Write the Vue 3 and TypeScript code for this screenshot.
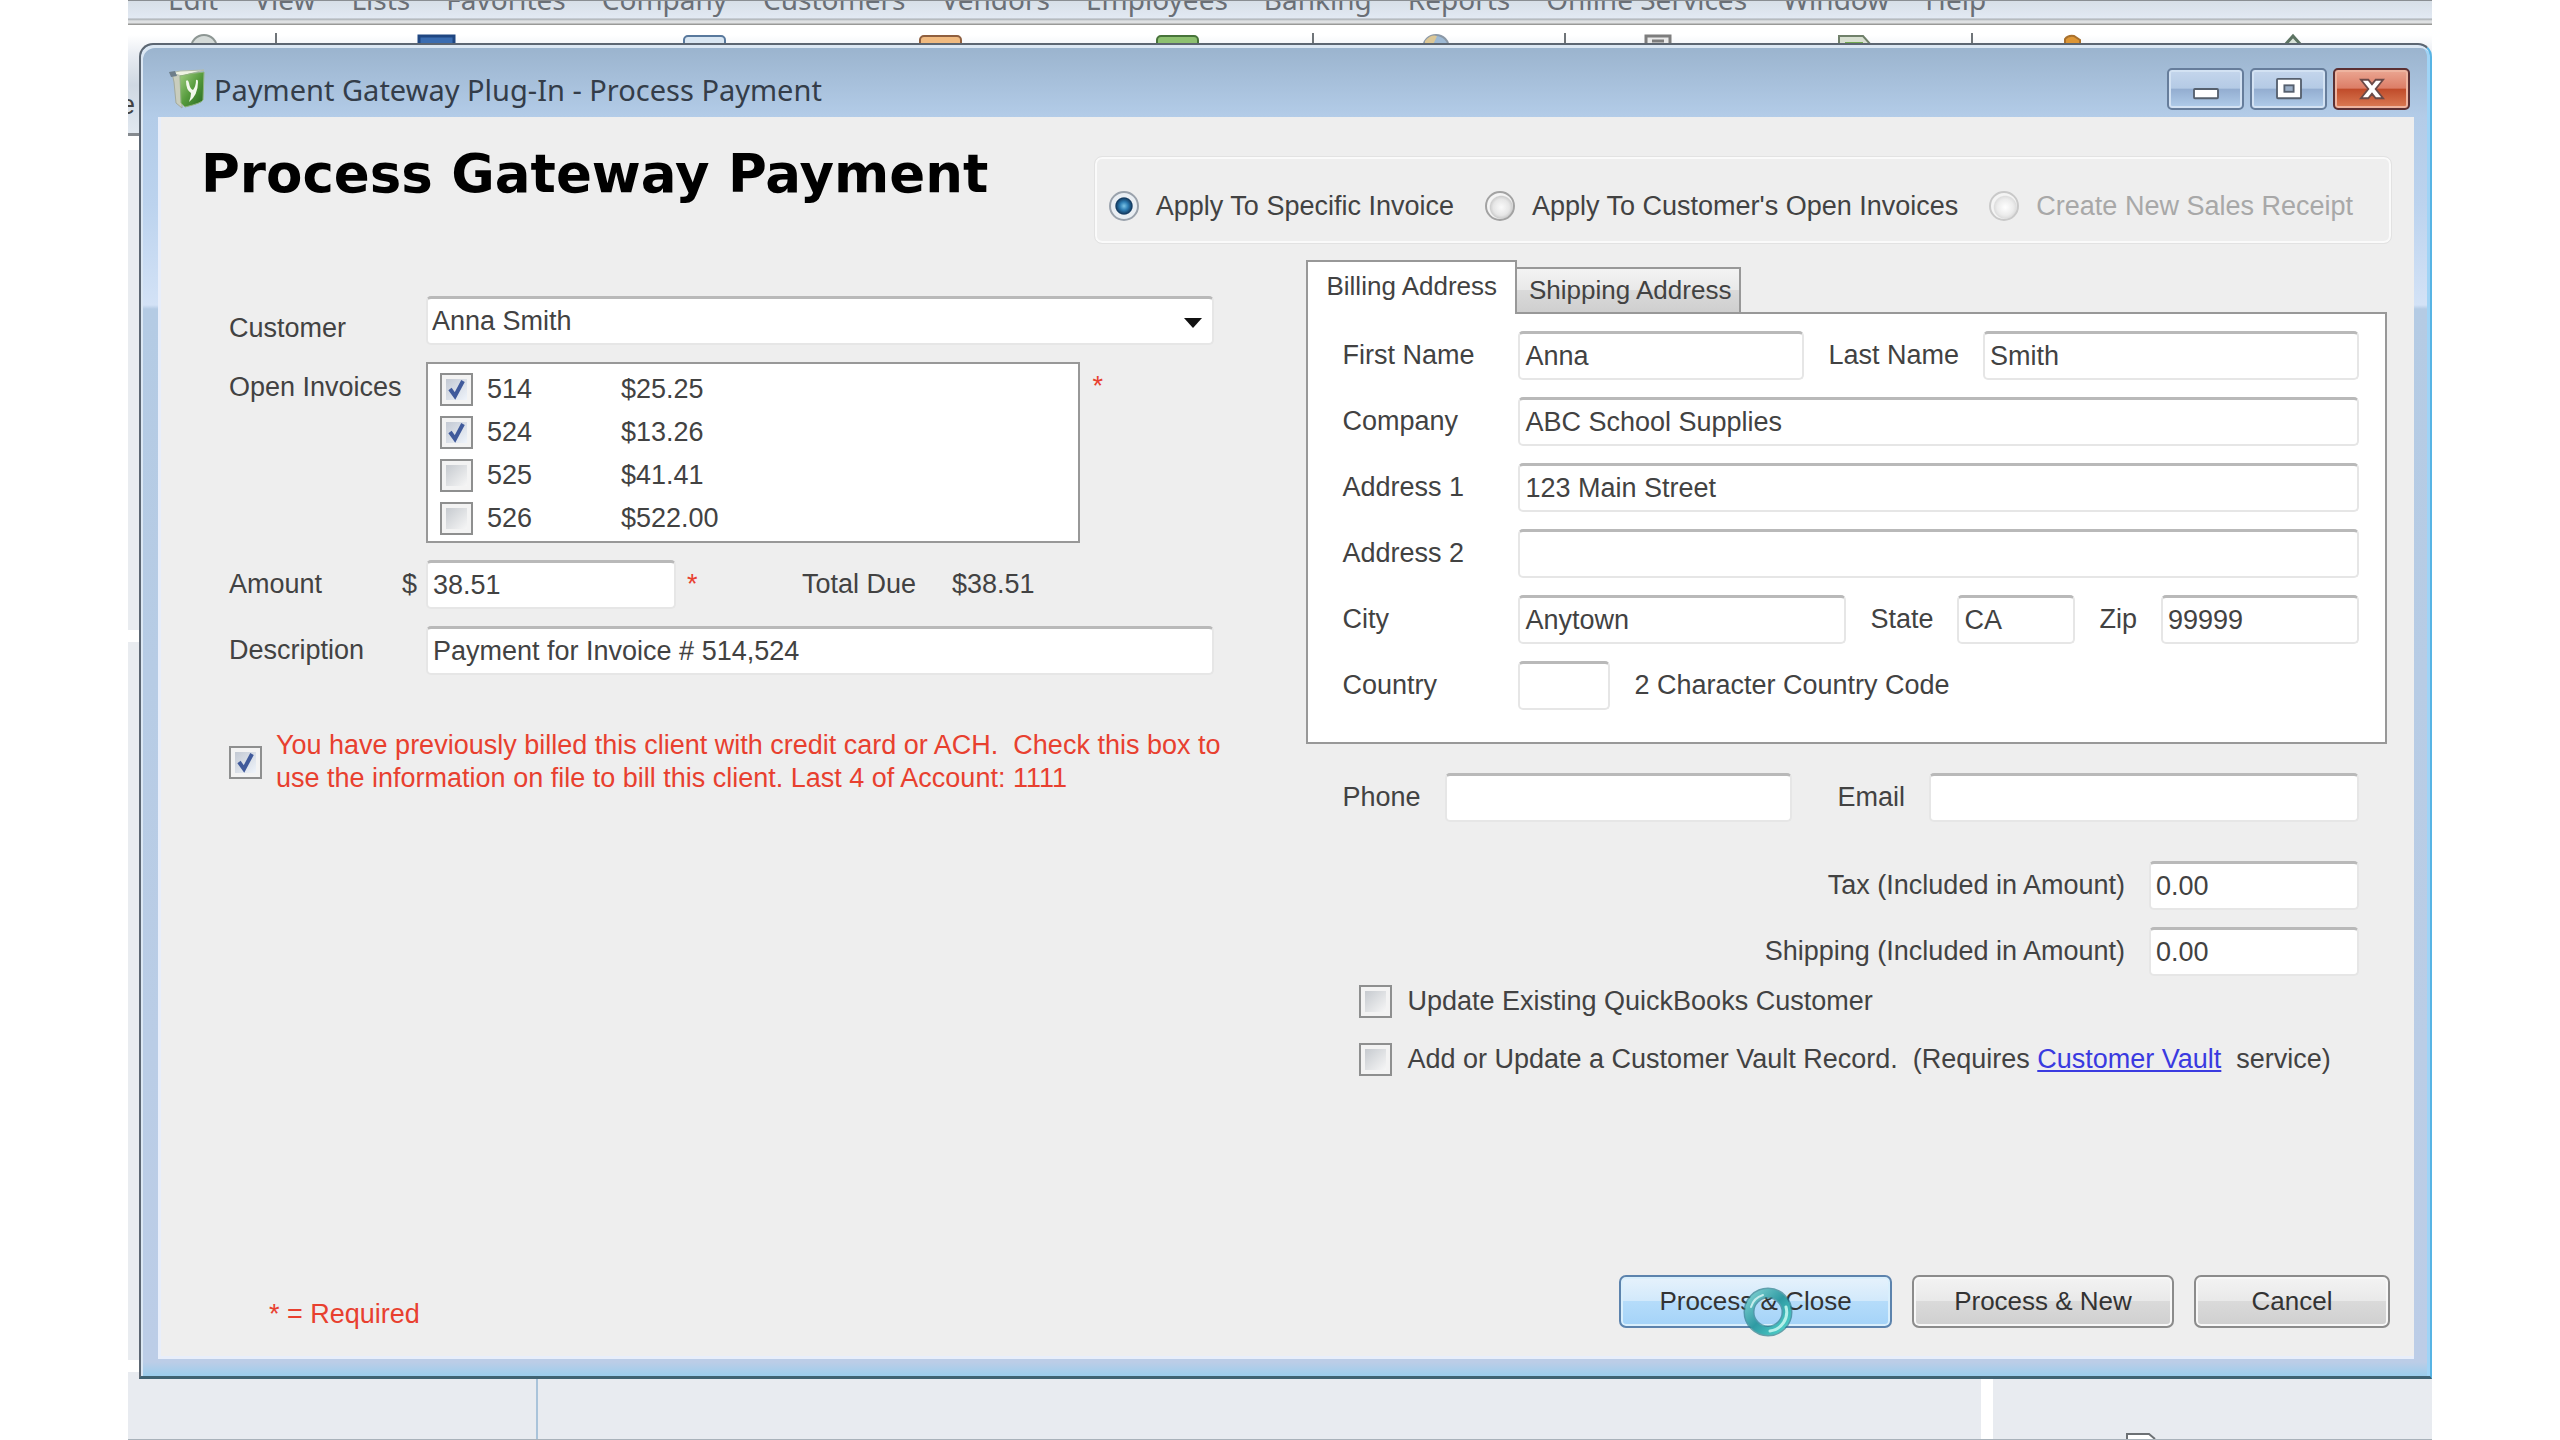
<script setup lang="ts">
import { ref } from 'vue'

interface Invoice {
  id: string
  amount: string
  selected: boolean
}

interface ApplyMode {
  value: string
  label: string
  disabled?: boolean
}

const menus: string[] = [
  'Edit', 'View', 'Lists', 'Favorites', 'Company', 'Customers', 'Vendors',
  'Employees', 'Banking', 'Reports', 'Online Services', 'Window', 'Help',
]

const modes: ApplyMode[] = [
  { value: 'specific', label: 'Apply To Specific Invoice' },
  { value: 'open', label: "Apply To Customer's Open Invoices" },
  { value: 'receipt', label: 'Create New Sales Receipt', disabled: true },
]
const mode = ref('specific')

const invoices = ref<Invoice[]>([
  { id: '514', amount: '$25.25', selected: true },
  { id: '524', amount: '$13.26', selected: true },
  { id: '525', amount: '$41.41', selected: false },
  { id: '526', amount: '$522.00', selected: false },
])

const customer = ref('Anna Smith')
const amount = ref('38.51')
const description = ref('Payment for Invoice # 514,524')
const useOnFile = ref(true)
const firstName = ref('Anna')
const lastName = ref('Smith')
const company = ref('ABC School Supplies')
const address1 = ref('123 Main Street')
const address2 = ref('')
const city = ref('Anytown')
const state = ref('CA')
const zip = ref('99999')
const country = ref('')
const phone = ref('')
const email = ref('')
const tax = ref('0.00')
const shipping = ref('0.00')
const updateCustomer = ref(false)
const updateVault = ref(false)
</script>

<template>
  <div class="stage">
    <div class="host">
      <nav class="menubar">
        <span v-for="m in menus" :key="m">{{ m }}</span>
      </nav>
      <div class="toolbar">
        <svg class="tool-icons" viewBox="0 0 2304 20" aria-hidden="true">
          <circle cx="76" cy="23" r="13" fill="#d4dad8" stroke="#8d9693" stroke-width="2" />
          <path d="M148 8v12M1185 8v12M1437 8v12M1844 8v12" stroke="#6f7478" stroke-width="2" />
          <rect x="291" y="11" width="35" height="14" fill="#3a6cb0" stroke="#1f4681" stroke-width="3" />
          <rect x="556" y="11" width="41" height="16" rx="4" fill="#d9e6f2" stroke="#58789c" stroke-width="2" />
          <rect x="792" y="11" width="41" height="16" rx="4" fill="#f0ba80" stroke="#8f5f3e" stroke-width="2" />
          <rect x="1029" y="11" width="41" height="16" rx="4" fill="#8dc070" stroke="#47733a" stroke-width="2" />
          <circle cx="1308" cy="23" r="13" fill="#9db9d4" stroke="#8b98a6" stroke-width="2" />
          <path d="M1297 16q6-7 12-5l-4 9h-8z" fill="#dcc796" />
          <path d="M1518 20v-9h24v9M1524 16h12" fill="#e9e9e9" stroke="#7d7d7d" stroke-width="3" />
          <path d="M1711 20v-9h24l8 9z" fill="#d7dfd0" stroke="#70806a" stroke-width="2" />
          <path d="M1717 20v-3h18v3z" fill="#71a950" />
          <path d="M1937 20v-6q3-4 9-3l6 4v5z" fill="#dd9636" stroke="#a8702d" stroke-width="2" />
          <path d="M2157 20l8-9 8 9" fill="#d9e3d9" stroke="#5c7362" stroke-width="3" />
        </svg>
        <span class="tool-label">e</span>
      </div>
      <div class="host-gap"></div>
      <div class="host-pane upper"></div>
      <div class="host-pane lower"></div>
      <div class="host-foot">
        <div class="foot-a"></div>
        <div class="foot-b"></div>
        <div class="foot-c">
          <svg viewBox="0 0 32 6" aria-hidden="true">
            <path d="M2 6V1h22l6 5" fill="#fff" stroke="#6c7074" stroke-width="2" />
          </svg>
        </div>
      </div>
    </div>

    <section class="dialog" role="dialog" aria-labelledby="dlg-title">
      <header class="titlebar">
        <svg class="app-icon" viewBox="0 0 38 42" aria-hidden="true">
          <defs>
            <linearGradient id="leaf" x1="0" y1="0" x2="1" y2="1">
              <stop offset="0" stop-color="#a3cf83" />
              <stop offset="0.5" stop-color="#569b3d" />
              <stop offset="1" stop-color="#25681f" />
            </linearGradient>
          </defs>
          <path d="M4 5l10 1v34l-6-5L6 14z" fill="#c9cdbd" stroke="#a3aa9c" />
          <path d="M3 5l9-2 24-1-22 6z" fill="#eef2e2" stroke="#b3bcab" />
          <path d="M12 8q12-3 24-4l-1 28q-1 3-18 7l-4-4z" fill="url(#leaf)" stroke="#8fb37c" />
          <path d="M1 4l6-1 2 5-6 1z" fill="#6d7d8a" />
          <path d="M18 13q2-2 3 2 1 6 4 7 3-4 3-10 2-1 2 2 0 13-9 20 2-5 2-9-5-3-5-12z" fill="#f3f8ec" />
        </svg>
        <span id="dlg-title" class="title-text">Payment Gateway Plug-In - Process Payment</span>
        <div class="win-buttons">
          <button type="button" class="win-btn" aria-label="Minimize">
            <svg viewBox="0 0 30 26" aria-hidden="true">
              <rect x="2" y="13" width="26" height="10" rx="1" fill="#fff" stroke="#56606e" stroke-width="2" />
            </svg>
          </button>
          <button type="button" class="win-btn" aria-label="Maximize">
            <svg viewBox="0 0 30 26" aria-hidden="true">
              <rect x="2" y="2" width="26" height="21" rx="1" fill="#fff" stroke="#56606e" stroke-width="2" />
              <rect x="10" y="9" width="10" height="7" fill="#9aaec6" stroke="#56606e" stroke-width="2" />
            </svg>
          </button>
          <button type="button" class="win-btn close" aria-label="Close">
            <svg viewBox="0 0 30 26" aria-hidden="true">
              <path d="M3 3h8l4 5 4-5h8l-8 10 8 10h-8l-4-5-4 5H3l8-10z" fill="#fff" stroke="#6b4a48" stroke-width="2" />
            </svg>
          </button>
        </div>
      </header>

      <form class="body" @submit.prevent>
        <div class="head">
          <h1>Process Gateway Payment</h1>
          <div class="modes" role="radiogroup">
            <label v-for="m in modes" :key="m.value" :class="{ disabled: m.disabled }">
              <input v-model="mode" type="radio" name="mode" :value="m.value" :disabled="m.disabled" />
              {{ m.label }}
            </label>
          </div>
        </div>

        <div class="columns">
          <div class="left">
            <div class="row low">
              <label for="customer">Customer</label>
              <div class="combo">
                <select id="customer" v-model="customer" class="field">
                  <option>Anna Smith</option>
                </select>
                <svg viewBox="0 0 18 10" aria-hidden="true"><path d="M0 0h18l-9 10z" fill="#111" /></svg>
              </div>
            </div>
            <div class="row top">
              <span class="caption">Open Invoices</span>
              <div class="list-wrap">
                <ul class="invoices">
                  <li v-for="inv in invoices" :key="inv.id">
                    <label>
                      <input v-model="inv.selected" type="checkbox" />
                      <span class="inv-id">{{ inv.id }}</span>
                      <span>{{ inv.amount }}</span>
                    </label>
                  </li>
                </ul>
                <span class="star">*</span>
              </div>
            </div>
            <div class="row">
              <label for="amount" class="money">Amount <span>$</span></label>
              <div class="amount-line">
                <input id="amount" v-model="amount" class="field" type="text" />
                <span class="star">*</span>
                <span class="due">Total Due</span>
                <output>$38.51</output>
              </div>
            </div>
            <div class="row">
              <label for="description">Description</label>
              <input id="description" v-model="description" class="field" type="text" />
            </div>
            <label class="on-file">
              <input v-model="useOnFile" type="checkbox" />
              <span>You have previously billed this client with credit card or ACH.&nbsp; Check this box to<br />use the information on file to bill this client. Last 4 of Account: 1111</span>
            </label>
          </div>

          <div class="right">
            <div class="tabs" role="tablist">
              <button type="button" role="tab" aria-selected="true" class="tab active">Billing Address</button>
              <button type="button" role="tab" aria-selected="false" class="tab">Shipping Address</button>
            </div>
            <div class="panel" role="tabpanel">
              <div class="prow">
                <label for="first">First Name</label>
                <div class="split">
                  <input id="first" v-model="firstName" class="field first" type="text" />
                  <label for="last">Last Name</label>
                  <input id="last" v-model="lastName" class="field grow" type="text" />
                </div>
              </div>
              <div class="prow">
                <label for="company">Company</label>
                <input id="company" v-model="company" class="field" type="text" />
              </div>
              <div class="prow">
                <label for="addr1">Address 1</label>
                <input id="addr1" v-model="address1" class="field" type="text" />
              </div>
              <div class="prow">
                <label for="addr2">Address 2</label>
                <input id="addr2" v-model="address2" class="field" type="text" />
              </div>
              <div class="prow">
                <label for="city">City</label>
                <div class="split">
                  <input id="city" v-model="city" class="field grow" type="text" />
                  <label for="state">State</label>
                  <input id="state" v-model="state" class="field state" type="text" />
                  <label for="zip">Zip</label>
                  <input id="zip" v-model="zip" class="field zip" type="text" />
                </div>
              </div>
              <div class="prow">
                <label for="country">Country</label>
                <div class="split">
                  <input id="country" v-model="country" class="field country" type="text" />
                  <span>2 Character Country Code</span>
                </div>
              </div>
            </div>
            <div class="contact">
              <label for="phone">Phone</label>
              <input id="phone" v-model="phone" class="field phone" type="text" />
              <label for="email" class="email-label">Email</label>
              <input id="email" v-model="email" class="field grow" type="text" />
            </div>
            <div class="extras">
              <div class="extra">
                <label for="tax">Tax (Included in Amount)</label>
                <input id="tax" v-model="tax" class="field" type="text" />
              </div>
              <div class="extra">
                <label for="ship">Shipping (Included in Amount)</label>
                <input id="ship" v-model="shipping" class="field" type="text" />
              </div>
            </div>
            <div class="options">
              <div class="option">
                <input id="upd" v-model="updateCustomer" type="checkbox" />
                <label for="upd">Update Existing QuickBooks Customer</label>
              </div>
              <div class="option">
                <input id="vault" v-model="updateVault" type="checkbox" />
                <label for="vault">Add or Update a Customer Vault Record.&nbsp; (Requires <a href="#">Customer Vault</a>&nbsp; service)</label>
              </div>
            </div>
          </div>
        </div>

        <footer class="foot">
          <span class="required">* = Required</span>
          <div class="actions">
            <button type="submit" class="btn primary">
              Process &amp; Close
              <svg class="busy" viewBox="0 0 50 50" aria-hidden="true">
                <defs>
                  <linearGradient id="ring" x1="0" y1="0" x2="1" y2="1">
                    <stop offset="0" stop-color="#7ccfd0" />
                    <stop offset="0.5" stop-color="#2f9aa3" />
                    <stop offset="1" stop-color="#4fd3cb" />
                  </linearGradient>
                </defs>
                <circle cx="25" cy="25" r="19" fill="none" stroke="#2b7f8c" stroke-opacity="0.7" stroke-width="11" />
                <circle cx="25" cy="25" r="19" fill="none" stroke="url(#ring)" stroke-width="8" />
                <path d="M43 20a19 19 0 0 1-16 24" fill="none" stroke="#b5f0ea" stroke-width="3" stroke-linecap="round" />
                <path d="M8 20a18 18 0 0 1 12-12" fill="none" stroke="#c5ecec" stroke-width="2" stroke-linecap="round" />
              </svg>
            </button>
            <button type="button" class="btn new">Process &amp; New</button>
            <button type="button" class="btn cancel">Cancel</button>
          </div>
        </footer>
      </form>
    </section>
  </div>
</template>

<style>
body {
  margin: 0;
  background: #fff;
}
</style>

<style scoped>
* {
  box-sizing: border-box;
}

.stage {
  position: relative;
  margin: 0 5%;
  min-height: 100vh;
  overflow: hidden;
  display: flex;
  font-family: 'Liberation Sans', Arial, sans-serif;
  font-size: 27px;
  line-height: 33px;
  color: #424242;
}

/* Application window behind the dialog */
.host {
  flex: 1;
  min-width: 0;
  display: flex;
  flex-direction: column;
  background: #fff;
}

.menubar {
  display: flex;
  align-items: flex-end;
  gap: 36px;
  height: 25px;
  padding: 0 0 9px 40px;
  overflow: hidden;
  white-space: nowrap;
  font-family: 'Noto Sans', sans-serif;
  font-size: 28px;
  color: #6a6f76;
  background: linear-gradient(#d7dfe7, #e2e9f3 17px, #a9aeb3 18px, #dfe1e3 20px, #dfe1e3 22px, #9a9a98 23px);
  border-top: 1px solid #8a8e92;
}

.toolbar {
  height: 111px;
  background: linear-gradient(#fff 10px, #e8ecf2 30px, #cfd8e2 60px, #e1e8f0);
  border-bottom: 3px solid #858a8f;
}

.tool-icons {
  display: block;
  width: 100%;
}

.tool-label {
  display: block;
  margin-top: 44px;
  margin-left: -8px;
}

.host-gap {
  height: 14px;
}

.host-pane {
  background: #e9ecf0;
}

.host-pane.upper {
  height: 480px;
}

.host-pane.lower {
  flex: 1;
  margin: 12px 0;
}

.host-foot {
  display: grid;
  grid-template-columns: 410fr 1443fr 451fr;
  height: 68px;
  border-bottom: 1px solid #a9b2ba;
}

.host-foot > div {
  background: #e8ebf0;
}

.host-foot .foot-a {
  border-right: 2px solid #a9c3da;
}

.host-foot .foot-c {
  border-left: 12px solid #fff;
  display: flex;
  align-items: flex-end;
  padding-left: 132px;
}

.foot-c svg {
  width: 32px;
  height: 6px;
}

/* Dialog window */
.dialog {
  position: absolute;
  inset: 43px 0 61px 11px;
  display: flex;
  flex-direction: column;
  padding: 0 16px 17px 17px;
  border: 2px solid #5c6672;
  border-right: 2px solid #58b4e4;
  border-bottom: 3px solid #3f6272;
  border-radius: 14px 14px 0 0;
  background: linear-gradient(#9ab3cd, #b3cce8 72px, #bcd3ee 160px, #d3e2f6 260px, #b4cbe4 264px, #bacde6 1000px, #bccde7 calc(100% - 14px), #9bcdec);
  box-shadow: inset 2px 3px 0 #dbe7f3, inset -3px 0 0 #a0d4f6;
}

.titlebar {
  display: flex;
  align-items: center;
  height: 72px;
  padding: 16px 4px 0 10px;
  gap: 8px;
}

.app-icon {
  width: 38px;
  height: 42px;
}

.title-text {
  flex: 1;
  font-family: 'Noto Sans', sans-serif;
  font-size: 29px;
  color: #343d49;
}

.win-buttons {
  display: flex;
  gap: 6px;
}

.win-btn {
  width: 77px;
  height: 42px;
  padding: 0;
  display: flex;
  align-items: center;
  justify-content: center;
  border: 2px solid #667d9b;
  border-radius: 5px;
  background: linear-gradient(#c5d6ec, #b4cae5 48%, #93add0 50%, #b1cdea);
  box-shadow: inset 0 0 0 2px #d3e2f3;
}

.win-btn svg {
  width: 28px;
  height: 24px;
}

.win-btn.close {
  border-color: #5b3033;
  background: linear-gradient(#eba793, #dc7d66 48%, #c04b2a 50%, #db7c55);
  box-shadow: inset 0 0 0 2px #eeb4a0;
}

.body {
  flex: 1;
  display: flex;
  flex-direction: column;
  background: #eee;
  box-shadow: inset 3px -3px 0 #e8eefa;
}

.head {
  display: flex;
  justify-content: space-between;
  align-items: flex-start;
  padding: 40px 23px 0 43px;
}

h1 {
  margin: 0;
  font-family: 'DejaVu Sans', Verdana, sans-serif;
  font-size: 53px;
  line-height: 34px;
  font-weight: 700;
  color: #000;
  white-space: nowrap;
}

.modes {
  display: flex;
  gap: 31px;
  align-items: center;
  height: 86px;
  padding: 12px 36px 0 12px;
  border: 2px solid #fafafa;
  border-radius: 7px;
  outline: 1px solid #e2e2e2;
  white-space: nowrap;
}

.modes label {
  display: flex;
  align-items: center;
  gap: 17px;
}

.modes .disabled {
  color: #a8a8a8;
}

input[type='radio'] {
  appearance: none;
  width: 30px;
  height: 30px;
  margin: 0;
  border: 2px solid #a2a2a2;
  border-radius: 50%;
  background: radial-gradient(circle at 55% 55%, #fafafa, #e6e6e6 40%, #cfcfcf 54%, #f4f4f4 60%);
}

input[type='radio']:checked {
  border-color: #9aa2ac;
  background: radial-gradient(circle at 50% 50%, #7cc4e6 0, #2f7fb5 22%, #12395f 44%, #e9eef3 50%);
}

input[type='radio']:disabled {
  border-color: #c9c9c9;
  background: radial-gradient(circle at 55% 55%, #fff, #ececec 40%, #dedede 54%, #f4f4f4 60%);
}

input[type='checkbox'] {
  appearance: none;
  flex: none;
  width: 33px;
  height: 33px;
  margin: 0;
  border: 2px solid #8e8f8f;
  background: linear-gradient(135deg, #c6cacf, #f6f6f6) center / 21px 21px no-repeat #f3f3f3;
}

input[type='checkbox']:checked {
  background:
    url("data:image/svg+xml,%3Csvg xmlns='http://www.w3.org/2000/svg' viewBox='0 0 29 29'%3E%3Cpath d='M8 14l5 7L21 6' fill='none' stroke='%23405a9b' stroke-width='4'/%3E%3C/svg%3E") center / 29px 29px no-repeat,
    linear-gradient(135deg, #c3c9d3, #eff4fb) center / 21px 21px no-repeat #f3f3f3;
}

.field {
  appearance: none;
  width: 100%;
  min-width: 0;
  height: 49px;
  margin: 0;
  padding: 0 5px;
  border: 2px solid #e6e6e6;
  border-top: 3px solid #b9b9b9;
  border-radius: 5px;
  background: #fff;
  font: inherit;
  color: #424242;
}

.columns {
  display: grid;
  grid-template-columns: minmax(0, 985fr) minmax(0, 1080fr);
  gap: 92px;
  padding: 17px 27px 0 71px;
}

.left {
  display: flex;
  flex-direction: column;
  gap: 17px;
  padding-top: 36px;
}

.row {
  display: grid;
  grid-template-columns: 197px minmax(0, 1fr);
  align-items: center;
}

.row.low {
  align-items: end;
}

.row.top {
  align-items: start;
}

.caption {
  padding-top: 9px;
}

.combo {
  position: relative;
}

.combo select {
  display: block;
  padding-left: 4px;
}

.combo svg {
  position: absolute;
  right: 12px;
  top: 22px;
  width: 18px;
  height: 10px;
}

.list-wrap,
.amount-line {
  display: flex;
}

.list-wrap {
  gap: 12px;
}

.star {
  color: #e8402f;
  line-height: 49px;
}

.invoices {
  width: 83%;
  height: 181px;
  margin: 0;
  padding: 4px 12px;
  border: 2px solid #989898;
  background: #fff;
  list-style: none;
}

.invoices label {
  display: flex;
  align-items: center;
  height: 43px;
}

.inv-id {
  width: 134px;
  margin-left: 14px;
}

.money {
  display: flex;
  justify-content: space-between;
  padding-right: 9px;
}

.amount-line {
  align-items: center;
}

.amount-line .field {
  width: 250px;
}

.amount-line .star {
  width: 126px;
  padding-left: 11px;
}

.due {
  width: 150px;
}

.on-file {
  display: flex;
  align-items: center;
  gap: 14px;
  margin-top: 37px;
  color: #e8402f;
  white-space: nowrap;
}

/* Address tabs */
.tabs {
  display: flex;
  align-items: flex-end;
  height: 52px;
}

.tab {
  position: relative;
  height: 47px;
  margin: 0 0 -2px -2px;
  padding: 0 8px 0 12px;
  border: 2px solid #989898;
  background: linear-gradient(#f3f3f3, #e9e9e9 48%, #dadada 50%, #cfcfcf);
  font: inherit;
  font-size: 26px;
  color: #424242;
}

.tab.active {
  height: 54px;
  margin-left: 0;
  padding: 0 18px 4px;
  border-bottom: 0;
  background: #fff;
}

.panel {
  display: flex;
  flex-direction: column;
  gap: 17px;
  padding: 17px 26px 32px 34px;
  border: 2px solid #989898;
  background: #fff;
}

.prow {
  display: grid;
  grid-template-columns: 176px minmax(0, 1fr);
  align-items: center;
}

.split {
  display: flex;
  align-items: center;
  gap: 24px;
  white-space: nowrap;
}

.grow {
  flex: 1;
}

.first {
  width: 286px;
}

.state {
  width: 118px;
}

.zip {
  width: 198px;
}

.country {
  width: 92px;
}

.contact {
  display: flex;
  align-items: center;
  gap: 24px;
  padding: 29px 28px 0 36px;
}

.phone {
  width: 347px;
}

.email-label {
  margin-left: 22px;
}

.extras {
  display: flex;
  flex-direction: column;
  gap: 17px;
  padding: 39px 28px 0 0;
}

.extra {
  display: flex;
  justify-content: flex-end;
  align-items: center;
  gap: 24px;
}

.extra .field {
  width: 210px;
}

.options {
  display: flex;
  flex-direction: column;
  gap: 25px;
  padding: 9px 0 0 53px;
}

.option {
  display: flex;
  align-items: center;
  gap: 15px;
  white-space: nowrap;
}

a {
  color: #3a3ae0;
}

.foot {
  display: flex;
  justify-content: space-between;
  align-items: center;
  margin-top: auto;
  padding: 0 24px 28px 111px;
}

.required {
  padding-top: 26px;
  color: #e8402f;
}

.actions {
  display: flex;
  gap: 20px;
}

.btn {
  height: 53px;
  padding: 0;
  border: 2px solid #8b8b8b;
  border-radius: 7px;
  background: linear-gradient(#f3f3f3, #e9e9e9 48%, #dadada 50%, #cfcfcf);
  box-shadow: inset 0 0 0 2px #f7f7f7;
  font: inherit;
  font-size: 26px;
  color: #333;
}

.btn.primary {
  position: relative;
  width: 273px;
  border-color: #5c83ad;
  background: linear-gradient(#e6f2fc, #d2e9fb 48%, #b5dcfa 50%, #a4d3f8);
  box-shadow: inset 0 0 0 2px #d9effc;
}

.btn.new {
  width: 262px;
}

.btn.cancel {
  width: 196px;
}

.busy {
  position: absolute;
  left: 122px;
  top: 10px;
  width: 50px;
  height: 50px;
}
</style>
